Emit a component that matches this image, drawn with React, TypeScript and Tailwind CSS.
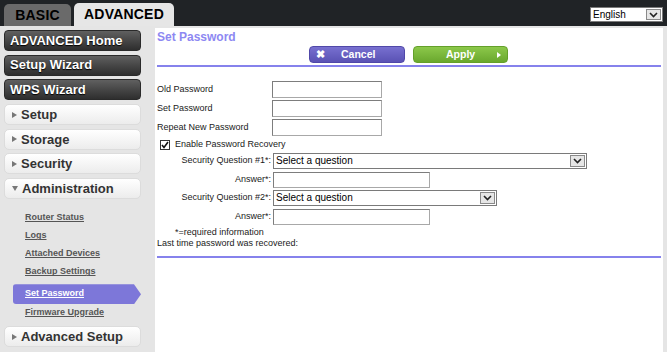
import type { ReactNode } from 'react';

const SUB_LINKS = ['Router Status', 'Logs', 'Attached Devices', 'Backup Settings'];

function Chevron() {
  return (
    <svg width="9" height="6" viewBox="0 0 9 6" fill="none">
      <path d="M1 1l3.5 3.5L8 1" stroke="#222" strokeWidth="1.6" />
    </svg>
  );
}

function FakeSelect({ width, text, className = '' }: { width: string; text: string; className?: string }) {
  return (
    <div className={`${width} h-full flex items-stretch bg-white border border-[#7a7a7a] ${className}`}>
      <span className="flex-1 pl-[2px] text-[10px] leading-none flex items-center text-black">{text}</span>
      <span className="w-[15px] m-[1px] flex items-center justify-center bg-[#e6e6e6] border border-[#8a8a8a]">
        <Chevron />
      </span>
    </div>
  );
}

function DarkButton({ children }: { children: ReactNode }) {
  return (
    <div className="w-[137px] h-[21px] flex-none rounded-[4px] border border-[#2a2a2a] bg-gradient-to-b from-[#606060] to-[#2e2e2e] pl-[5px] flex items-center text-white text-[13px] font-bold [text-shadow:0_1px_1px_#000]">
      {children}
    </div>
  );
}

function LightButton({ children, open = false }: { children: ReactNode; open?: boolean }) {
  return (
    <div className="w-[137px] h-[21px] flex-none rounded-[5px] border border-[#dcdcdc] bg-gradient-to-b from-white to-[#ececec] pl-[7px] flex items-center gap-[4px] text-[#333] text-[13px] font-bold">
      {open ? (
        <svg width="6" height="5" viewBox="0 0 6 5"><path d="M0 0h6L3 5z" fill="#777" /></svg>
      ) : (
        <svg width="5" height="6" viewBox="0 0 5 6"><path d="M0 0l5 3-5 3z" fill="#777" /></svg>
      )}
      <span>{children}</span>
    </div>
  );
}

function TextInput({ width }: { width: string }) {
  return <div className={`${width} h-full bg-white border border-[#a8a8a8] border-t-[#7d7d7d] border-l-[#7d7d7d]`} />;
}

export default function App() {
  return (
    <div className="w-[667px] h-[352px] overflow-hidden bg-[#e5e5e5] font-['Liberation_Sans',Arial,sans-serif]">
      {/* Top bar with tabs */}
      <div className="h-[26px] bg-[#202326] flex items-end pl-[4px] pr-[4px]">
        <div className="w-[67px] h-[22px] rounded-t-[5px] bg-[#6a6a6a] flex items-center justify-center text-[14px] font-bold text-black tracking-[0.2px]">
          BASIC
        </div>
        <div className="ml-[3px] w-[100px] h-[23px] rounded-t-[5px] bg-[#e6e6e6] flex items-center justify-center text-[14px] font-bold text-black tracking-[0.2px]">
          ADVANCED
        </div>
        <div className="ml-auto self-start mt-[7px] h-[15px]">
          <FakeSelect width="w-[73px]" text="English" />
        </div>
      </div>

      <div className="flex h-[326px]">
        {/* Sidebar */}
        <div className="w-[155px] flex-none pl-[4px] pt-[4px] flex flex-col">
          <div className="flex flex-col gap-[3.7px]">
            <DarkButton>ADVANCED Home</DarkButton>
            <DarkButton>Setup Wizard</DarkButton>
            <DarkButton>WPS Wizard</DarkButton>
            <LightButton>Setup</LightButton>
            <LightButton>Storage</LightButton>
            <LightButton>Security</LightButton>
            <LightButton open>Administration</LightButton>
          </div>
          <div className="mt-[10px] flex flex-col">
            {SUB_LINKS.map(l => (
              <div key={l} className="h-[18px] pl-[21px] flex items-center text-[9px] font-bold text-[#555] underline">
                {l}
              </div>
            ))}
            <div className="mt-[3px] ml-[9px] w-[128px] h-[20px] rounded-l-[3px] bg-[#7d77d9] pl-[12px] flex items-center text-[9px] font-bold text-white underline [clip-path:polygon(0_0,calc(100%-7px)_0,100%_50%,calc(100%-7px)_100%,0_100%)]">
              Set Password
            </div>
            <div className="h-[17px] pl-[21px] flex items-center text-[9px] font-bold text-[#555] underline">
              Firmware Upgrade
            </div>
          </div>
          <div className="mt-[5px]">
            <LightButton>Advanced Setup</LightButton>
          </div>
        </div>

        {/* Content */}
        <div className="mt-[2px] w-[508px] bg-white px-[2px] flex flex-col">
          <div className="pt-[2px] leading-[14px] text-[12px] font-bold text-[#8d88f2]">Set Password</div>
          <div className="mt-[2px] pl-[152px] flex items-center">
            <div className="w-[96px] h-[17px] rounded-[4px] bg-gradient-to-b from-[#7870d0] to-[#5a52b4] border border-[#5048a8] flex items-center text-white text-[10.5px] font-bold">
              <span className="pl-[6px] w-[28px] text-[11px]">✖</span>
              <span className="ml-[3px]">Cancel</span>
            </div>
            <div className="ml-[8px] w-[95px] h-[17px] rounded-[4px] bg-gradient-to-b from-[#8cc84a] to-[#6aa82e] border border-[#64a02a] flex items-center text-white text-[10.5px] font-bold">
              <span className="ml-[32px]">Apply</span>
              <svg className="ml-auto mr-[6px]" width="4" height="6" viewBox="0 0 4 6"><path d="M0 0l4 3-4 3z" fill="#fff" /></svg>
            </div>
          </div>
          <div className="mt-[2px] h-[2px] bg-[#8682ec]" />

          <div className="mt-[14px] flex flex-col gap-[2px] text-[9px] text-[#1a1a1a]">
            {['Old Password', 'Set Password', 'Repeat New Password'].map(l => (
              <div key={l} className="h-[17px] flex items-center">
                <span className="w-[115px]">{l}</span>
                <TextInput width="w-[110px]" />
              </div>
            ))}
          </div>

          <div className="mt-[3px] h-[12px] pl-[3px] flex items-center gap-[5px] text-[9px] text-[#1a1a1a]">
            <span className="w-[10px] h-[10px] border border-[#333] bg-white flex items-center justify-center">
              <svg width="8" height="8" viewBox="0 0 8 8" fill="none"><path d="M1 4l2 2.5L7 1" stroke="#111" strokeWidth="1.6" /></svg>
            </span>
            Enable Password Recovery
          </div>

          <div className="mt-[2px] flex flex-col gap-[2.5px] text-[9px] text-[#1a1a1a]">
            <div className="h-[16px] flex items-center">
              <span className="w-[114px] text-right">Security Question #1*:</span>
              <FakeSelect width="w-[314px]" text="Select a question" className="ml-[2px]" />
            </div>
            <div className="h-[16px] flex items-center">
              <span className="w-[114px] text-right">Answer*:</span>
              <div className="ml-[2px] h-full"><TextInput width="w-[157px]" /></div>
            </div>
            <div className="h-[16px] flex items-center">
              <span className="w-[114px] text-right">Security Question #2*:</span>
              <FakeSelect width="w-[224px]" text="Select a question" className="ml-[2px]" />
            </div>
            <div className="h-[16px] flex items-center">
              <span className="w-[114px] text-right">Answer*:</span>
              <div className="ml-[2px] h-full"><TextInput width="w-[157px]" /></div>
            </div>
          </div>

          <div className="mt-[2px] h-[10px] pl-[18px] leading-[10px] text-[9px] text-[#1a1a1a]">*=required information</div>
          <div className="mt-[1px] h-[10px] leading-[10px] text-[9px] text-[#1a1a1a]">Last time password was recovered:</div>
          <div className="mt-[8px] h-[2px] bg-[#8682ec]" />
        </div>
      </div>
    </div>
  );
}
